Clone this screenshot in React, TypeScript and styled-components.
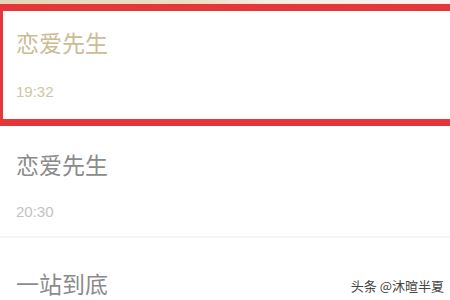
import styled, { createGlobalStyle } from 'styled-components';

const GlobalStyle = createGlobalStyle`
  html, body {
    margin: 0;
    padding: 0;
    background: #ffffff;
    overflow: hidden;
  }
  body {
    font-family: 'Noto Sans CJK SC', 'Noto Sans', sans-serif;
  }
`;

type Item = { title: string; time?: string; active?: boolean };

const items: Item[] = [
  { title: '恋爱先生', time: '19:32', active: true },
  { title: '恋爱先生', time: '20:30' },
  { title: '一站到底' },
];

const App = () => {
  return (
    <>
      <GlobalStyle />
      <Page>
        <TopStrip />
        <List>
          {items.map((item, i) => (
            <Row key={i} active={item.active}>
              <Title active={item.active}>{item.title}</Title>
              {item.time && <Time active={item.active}>{item.time}</Time>}
            </Row>
          ))}
        </List>
        <Watermark>头条 @沐暄半夏</Watermark>
      </Page>
    </>
  );
};
export default App;

const Page = styled.div`
  position: relative;
  width: 450px;
  height: 300px;
  overflow: hidden;
  background: #ffffff;
`;

const TopStrip = styled.div`
  height: 4px;
  background: linear-gradient(to right, #e3d5b9 0%, #ecdfc8 45%, #f7ece2 60%, #fcf3ee 100%);
`;

const List = styled.div`
  display: flex;
  flex-direction: column;
`;

const Row = styled.div<{ active?: boolean }>`
  display: flex;
  flex-direction: column;
  gap: ${({ active }) => (active ? '26px' : '24px')};
  width: ${({ active }) => (active ? '470px' : '450px')};
  box-sizing: border-box;
  padding: ${({ active }) => (active ? '18px 16px 17px 13px' : '25px 16px 14px 16px')};
  border-top: ${({ active }) => (active ? '7px solid #e5363a' : 'none')};
  border-bottom: ${({ active }) => (active ? '7px solid #e5363a' : '2px solid #f4f4f4')};
  border-left: ${({ active }) => (active ? '3px solid #e5363a' : 'none')};

  &:last-child {
    padding-top: 32px;
    border-bottom: none;
  }
`;

const Title = styled.div<{ active?: boolean }>`
  font-size: 23px;
  line-height: 27px;
  color: ${({ active }) => (active ? '#cbbc94' : '#8b8b8b')};
`;

const Time = styled.div<{ active?: boolean }>`
  font-family: 'Liberation Sans', 'Noto Sans', sans-serif;
  font-size: 15px;
  line-height: 20px;
  color: ${({ active }) => (active ? '#d0c5a6' : '#c2c2c2')};
`;

const Watermark = styled.div`
  position: absolute;
  right: 6px;
  bottom: 6px;
  font-size: 13px;
  line-height: 16px;
  color: #454545;
  text-shadow: 0 0 2px #ffffff, 0 0 2px #ffffff;
`;
